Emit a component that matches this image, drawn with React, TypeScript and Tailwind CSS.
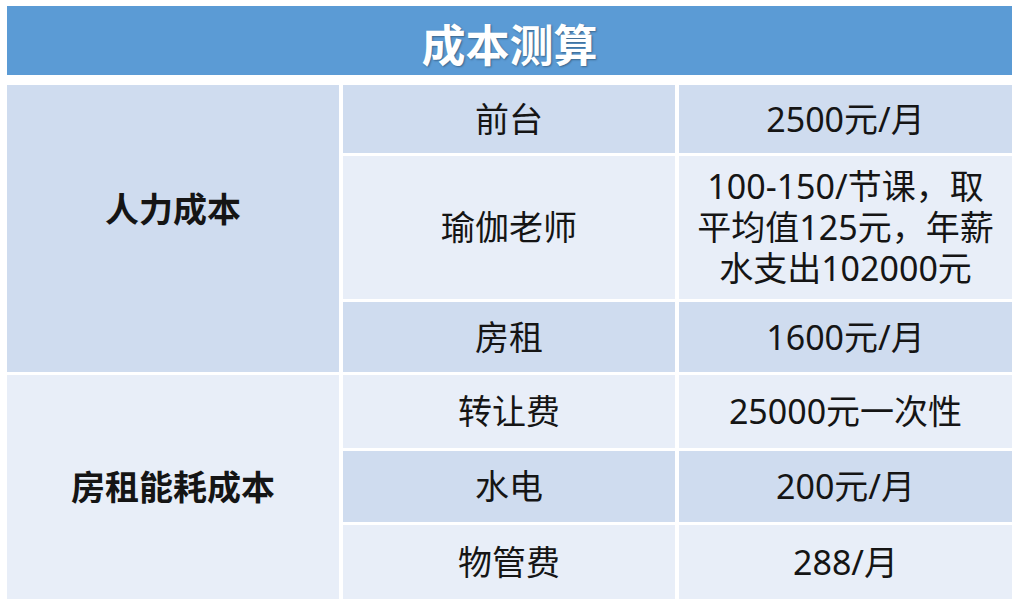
const font = {
  fontFamily: '"Noto Sans", "Noto Sans CJK SC", sans-serif',
};

type Row = { item: string; value: React.ReactNode; dark: boolean; h: string };

const rows: Row[] = [
  { item: "前台", value: "2500元/月", dark: true, h: "h-[68px]" },
  {
    item: "瑜伽老师",
    value: (
      <>
        100-150/节课，取
        <br />
        平均值125元，年薪
        <br />
        水支出102000元
      </>
    ),
    dark: false,
    h: "h-[143px]",
  },
  { item: "房租", value: "1600元/月", dark: true, h: "h-[70px]" },
  { item: "转让费", value: "25000元一次性", dark: false, h: "h-[73px]" },
  { item: "水电", value: "200元/月", dark: true, h: "h-[71px]" },
  { item: "物管费", value: "288/月", dark: false, h: "h-[74px]" },
];

function Cell({ dark, className, children }: { dark: boolean; className?: string; children: React.ReactNode }) {
  return (
    <div
      className={
        "flex items-center justify-center text-center text-[34px] leading-[41px] text-[#151515] " +
        (dark ? "bg-[#cfdcef] " : "bg-[#e8eef8] ") +
        (className ?? "")
      }
    >
      {children}
    </div>
  );
}

export default function App() {
  return (
    <div className="w-[1018px] h-[604px] bg-white pt-[6px] pl-[7px]" style={font}>
      <div className="w-[1005px] h-[69px] bg-[#5b9bd5] flex items-center justify-center">
        <span className="text-white font-bold text-[44px] leading-none pt-[8px] [text-shadow:1px_1px_2px_rgba(0,0,0,0.35)]">
          成本测算
        </span>
      </div>

      <div className="mt-[10px] grid grid-cols-[332px_332px_333px] gap-x-[4px] gap-y-[3px]">
        <Cell dark className="row-span-3 font-bold pb-[38px]">
          人力成本
        </Cell>
        <Cell dark={rows[0].dark} className={rows[0].h}>{rows[0].item}</Cell>
        <Cell dark={rows[0].dark} className={rows[0].h}>{rows[0].value}</Cell>
        <Cell dark={rows[1].dark} className={rows[1].h}>{rows[1].item}</Cell>
        <Cell dark={rows[1].dark} className={rows[1].h}>{rows[1].value}</Cell>
        <Cell dark={rows[2].dark} className={rows[2].h}>{rows[2].item}</Cell>
        <Cell dark={rows[2].dark} className={rows[2].h}>{rows[2].value}</Cell>

        <Cell dark={false} className="row-span-3 font-bold">
          房租能耗成本
        </Cell>
        <Cell dark={rows[3].dark} className={rows[3].h}>{rows[3].item}</Cell>
        <Cell dark={rows[3].dark} className={rows[3].h}>{rows[3].value}</Cell>
        <Cell dark={rows[4].dark} className={rows[4].h}>{rows[4].item}</Cell>
        <Cell dark={rows[4].dark} className={rows[4].h}>{rows[4].value}</Cell>
        <Cell dark={rows[5].dark} className={rows[5].h}>{rows[5].item}</Cell>
        <Cell dark={rows[5].dark} className={rows[5].h}>{rows[5].value}</Cell>
      </div>
    </div>
  );
}
